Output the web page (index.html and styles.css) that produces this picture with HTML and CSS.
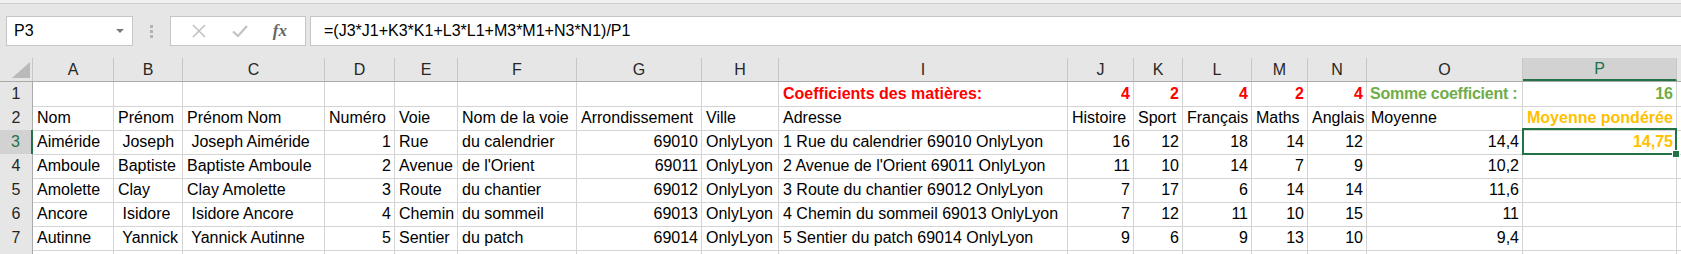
FILE: index.html
```html
<!DOCTYPE html>
<html lang="fr">
<head>
    <meta charset="UTF-8">
    <title>Moyennes pondérées</title>
    <link rel="stylesheet" href="styles.css">
</head>
<body>
    <div class="ribbon-edge"></div>

    <!-- barre de formule -->
    <div class="formula-bar">
        <div class="name-box">
            <span>P3</span>
            <span class="caret"></span>
        </div>
        <div class="grip"><i></i><i></i><i></i></div>
        <div class="fx-buttons">
            <svg width="16" height="16" viewBox="0 0 16 16"><path d="M2 2L14 14M14 2L2 14" stroke="#c2c2c2" stroke-width="1.6" fill="none"/></svg>
            <svg width="18" height="16" viewBox="0 0 18 16"><path d="M2 8.5L7 13L16 3" stroke="#c2c2c2" stroke-width="2.2" fill="none"/></svg>
            <span class="fx">fx</span>
        </div>
        <div class="formula-input">=(J3*J1+K3*K1+L3*L1+M3*M1+N3*N1)/P1</div>
    </div>

    <!-- feuille -->
    <div class="sheet">
        <div class="row heads">
            <div class="corner"><svg width="18" height="16" viewBox="0 0 18 16"><path d="M18 0L18 16L0 16Z" fill="#b9b9b9"/></svg></div>
            <div class="h">A</div><div class="h">B</div><div class="h">C</div><div class="h">D</div>
            <div class="h">E</div><div class="h">F</div><div class="h">G</div><div class="h">H</div>
            <div class="h">I</div><div class="h">J</div><div class="h">K</div><div class="h">L</div>
            <div class="h">M</div><div class="h">N</div><div class="h">O</div><div class="h on">P</div>
            <div class="h"></div>
        </div>

        <div class="row">
            <div class="rh">1</div>
            <div class="c"></div><div class="c"></div><div class="c"></div><div class="c"></div>
            <div class="c"></div><div class="c"></div><div class="c"></div><div class="c"></div>
            <div class="c b red">Coefficients des matières:</div>
            <div class="c n b red">4</div><div class="c n b red">2</div><div class="c n b red">4</div>
            <div class="c n b red">2</div><div class="c n b red">4</div>
            <div class="c b green tight">Somme coefficient :</div>
            <div class="c n b green">16</div>
            <div class="c"></div>
        </div>

        <div class="row">
            <div class="rh">2</div>
            <div class="c">Nom</div><div class="c">Prénom</div><div class="c">Prénom Nom</div>
            <div class="c">Numéro</div><div class="c">Voie</div><div class="c">Nom de la voie</div>
            <div class="c">Arrondissement</div><div class="c">Ville</div><div class="c">Adresse</div>
            <div class="c">Histoire</div><div class="c">Sport</div><div class="c">Français</div>
            <div class="c">Maths</div><div class="c">Anglais</div><div class="c">Moyenne</div>
            <div class="c b gold">Moyenne pondérée</div>
            <div class="c"></div>
        </div>

        <div class="row">
            <div class="rh on">3</div>
            <div class="c">Aiméride</div><div class="c"> Joseph</div><div class="c"> Joseph Aiméride</div>
            <div class="c n">1</div><div class="c">Rue</div><div class="c">du calendrier</div>
            <div class="c n">69010</div><div class="c">OnlyLyon</div><div class="c">1 Rue du calendrier 69010 OnlyLyon</div>
            <div class="c n">16</div><div class="c n">12</div><div class="c n">18</div>
            <div class="c n">14</div><div class="c n">12</div><div class="c n">14,4</div>
            <div class="c n b gold active">14,75</div>
            <div class="c"></div>
        </div>

        <div class="row">
            <div class="rh">4</div>
            <div class="c">Amboule</div><div class="c">Baptiste</div><div class="c">Baptiste Amboule</div>
            <div class="c n">2</div><div class="c">Avenue</div><div class="c">de l'Orient</div>
            <div class="c n">69011</div><div class="c">OnlyLyon</div><div class="c">2 Avenue de l'Orient 69011 OnlyLyon</div>
            <div class="c n">11</div><div class="c n">10</div><div class="c n">14</div>
            <div class="c n">7</div><div class="c n">9</div><div class="c n">10,2</div>
            <div class="c"></div>
            <div class="c"></div>
        </div>

        <div class="row">
            <div class="rh">5</div>
            <div class="c">Amolette</div><div class="c">Clay</div><div class="c">Clay Amolette</div>
            <div class="c n">3</div><div class="c">Route</div><div class="c">du chantier</div>
            <div class="c n">69012</div><div class="c">OnlyLyon</div><div class="c">3 Route du chantier 69012 OnlyLyon</div>
            <div class="c n">7</div><div class="c n">17</div><div class="c n">6</div>
            <div class="c n">14</div><div class="c n">14</div><div class="c n">11,6</div>
            <div class="c"></div>
            <div class="c"></div>
        </div>

        <div class="row">
            <div class="rh">6</div>
            <div class="c">Ancore</div><div class="c"> Isidore</div><div class="c"> Isidore Ancore</div>
            <div class="c n">4</div><div class="c">Chemin</div><div class="c">du sommeil</div>
            <div class="c n">69013</div><div class="c">OnlyLyon</div><div class="c">4 Chemin du sommeil 69013 OnlyLyon</div>
            <div class="c n">7</div><div class="c n">12</div><div class="c n">11</div>
            <div class="c n">10</div><div class="c n">15</div><div class="c n">11</div>
            <div class="c"></div>
            <div class="c"></div>
        </div>

        <div class="row">
            <div class="rh">7</div>
            <div class="c">Autinne</div><div class="c"> Yannick</div><div class="c"> Yannick Autinne</div>
            <div class="c n">5</div><div class="c">Sentier</div><div class="c">du patch</div>
            <div class="c n">69014</div><div class="c">OnlyLyon</div><div class="c">5 Sentier du patch 69014 OnlyLyon</div>
            <div class="c n">9</div><div class="c n">6</div><div class="c n">9</div>
            <div class="c n">13</div><div class="c n">10</div><div class="c n">9,4</div>
            <div class="c"></div>
            <div class="c"></div>
        </div>

        <div class="row">
            <div class="rh"></div>
            <div class="c"></div><div class="c"></div><div class="c"></div><div class="c"></div>
            <div class="c"></div><div class="c"></div><div class="c"></div><div class="c"></div>
            <div class="c"></div><div class="c"></div><div class="c"></div><div class="c"></div>
            <div class="c"></div><div class="c"></div><div class="c"></div><div class="c"></div>
            <div class="c"></div>
        </div>
    </div>
</body>
</html>
```

FILE: styles.css
```css
* {
    margin: 0;
    padding: 0;
    box-sizing: border-box;
}

body {
    width: 1681px;
    height: 254px;
    overflow: hidden;
    background: white;
    color: black;
    font-family: "Liberation Sans", Arial, sans-serif;
    font-size: 16px;
}

.ribbon-edge {
    height: 4px;
    background: #f1f1f1;
    border-bottom: 1px solid #cfcfcf;
}

/* barre de formule */
.formula-bar {
    display: flex;
    align-items: center;
    height: 54px;
    padding: 0 0 0 6px;
    background: #e6e6e6;
}

.name-box, .fx-buttons, .formula-input {
    height: 30px;
    background: white;
    border: 1px solid #c6c6c6;
}

.name-box {
    width: 127px;
    display: flex;
    align-items: center;
    justify-content: space-between;
    padding: 0 8px 0 7px;
}

.caret {
    width: 0;
    height: 0;
    border-left: 4px solid transparent;
    border-right: 4px solid transparent;
    border-top: 4px solid #7a7a7a;
}

.grip {
    width: 37px;
    display: flex;
    flex-direction: column;
    align-items: center;
    gap: 2px;
}

.grip i {
    width: 3px;
    height: 3px;
    background: #b3b3b3;
}

.fx-buttons {
    width: 136px;
    display: flex;
    align-items: center;
    justify-content: space-around;
    padding: 0 6px 0 8px;
}

.fx {
    font-family: "Liberation Serif", "Times New Roman", serif;
    font-style: italic;
    font-weight: bold;
    font-size: 17px;
    color: #666;
}

.formula-input {
    flex: 1;
    margin-left: 4px;
    margin-right: -2px;
    padding: 0 13px;
    line-height: 28px;
}

/* feuille */
.row {
    display: grid;
    grid-template-columns: 33px 81px 69px 142px 70px 63px 119px 125px 77px 289px 66px 49px 69px 56px 59px 156px 154px 20px;
    height: 24px;
}

.heads {
    background: #e6e6e6;
    border-bottom: 1px solid #ababab;
}

.corner {
    display: flex;
    align-items: flex-end;
    justify-content: flex-end;
    padding: 0 2px 3px 0;
    border-right: 1px solid #c6c6c6;
}

.h {
    border-right: 1px solid #c6c6c6;
    text-align: center;
    line-height: 23px;
    color: #262626;
}

.h.on {
    background: #d2d2d2;
    color: #217346;
    border-bottom: 2px solid #217346;
    line-height: 21px;
}

.rh {
    background: #e6e6e6;
    border-right: 1px solid #ababab;
    border-bottom: 1px solid #d0d0d0;
    text-align: center;
    line-height: 24px;
    color: #262626;
}

.rh.on {
    background: #d2d2d2;
    color: #217346;
    border-right: 2px solid #217346;
}

.c {
    border-right: 1px solid #d4d4d4;
    border-bottom: 1px solid #d4d4d4;
    padding: 0 3px 0 4px;
    line-height: 24px;
    white-space: pre;
}

.n {
    text-align: right;
}

.b {
    font-weight: bold;
}

.red {
    color: #ff0000;
}

.green {
    color: #70ad47;
}

.gold {
    color: #ffc000;
}

.tight {
    letter-spacing: -0.25px;
    padding-left: 3px;
    overflow: hidden;
}

.active {
    position: relative;
}

.active::before {
    content: "";
    position: absolute;
    top: -2px;
    left: -1px;
    right: -1px;
    bottom: -1px;
    border: 2px solid #217346;
}

.active::after {
    content: "";
    position: absolute;
    right: -4px;
    bottom: -4px;
    width: 6px;
    height: 6px;
    background: #217346;
    border: 1px solid white;
}
```
